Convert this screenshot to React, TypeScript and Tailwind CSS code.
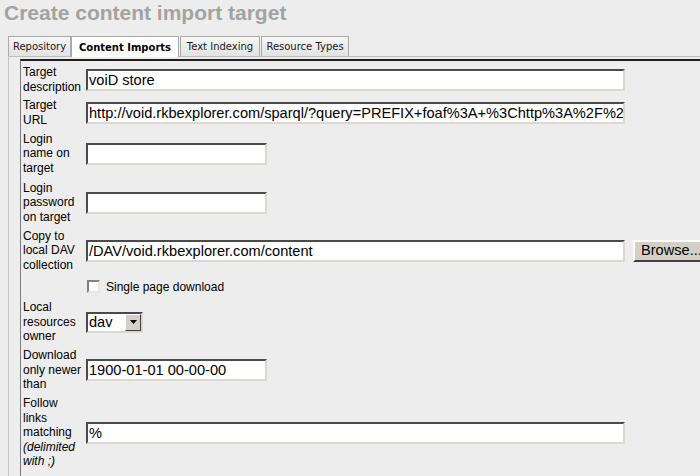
import React from "react";

const inputCls =
  "h-[22px] shrink-0 bg-white border-2 border-t-[#4a4a4a] border-l-[#4a4a4a] border-b-[#dcd8d0] border-r-[#dcd8d0] px-[1px] text-[14.6px] leading-[18px] text-black whitespace-nowrap overflow-hidden";

function Row({ h, label, children }: { h: number; label: React.ReactNode; children?: React.ReactNode }) {
  return (
    <div className="flex items-center" style={{ height: h }}>
      <div className="w-[59px] shrink-0 ml-[2px] text-[12px] leading-[14.5px] text-black">{label}</div>
      <div className="ml-[4px] flex items-center">{children}</div>
    </div>
  );
}

function Input({ w, value }: { w: number; value: string }) {
  return (
    <div className={inputCls} style={{ width: w }}>
      {value}
    </div>
  );
}

export default function App() {
  return (
    <div
      className="w-[700px] h-[476px] overflow-hidden bg-[#ededed]"
      style={{ fontFamily: '"Liberation Sans", Arial, sans-serif' }}
    >
      <div className="pl-[4px] pt-[1px] h-[37px] text-[21px] leading-[24px] font-bold text-[#a3a3a3]">
        Create content import target
      </div>
      <div className="ml-[8px] border-l border-[#c6c6c6]">
        <div
          className="flex h-[20px] border-b border-[#bdbdbd] items-end text-[10px]"
          style={{ fontFamily: '"DejaVu Sans", Verdana, sans-serif' }}
        >
          <div className="h-[20px] w-[63px] -ml-[1px] flex items-center justify-center border border-b-0 border-[#a9a9a9] bg-gradient-to-b from-[#f6f6f6] to-[#e2e2e2] text-[#1a1a1a]">
            Repository
          </div>
          <div className="h-[21px] -mb-[1px] w-[108px] flex items-center justify-center border border-b-0 border-[#a9a9a9] bg-white font-bold text-black">
            Content Imports
          </div>
          <div className="h-[20px] w-[80px] ml-[1px] flex items-center justify-center border border-b-0 border-[#a9a9a9] bg-gradient-to-b from-[#f6f6f6] to-[#e2e2e2] text-[#1a1a1a]">
            Text Indexing
          </div>
          <div className="h-[20px] w-[88px] ml-[1px] flex items-center justify-center border border-b-0 border-[#a9a9a9] bg-gradient-to-b from-[#f6f6f6] to-[#e2e2e2] text-[#1a1a1a]">
            Resource Types
          </div>
        </div>
        <div className="ml-[11px] mt-[2px] border-t-2 border-l border-t-[#1e1e1e] border-l-[#7a7a7a] pt-[2px] h-[420px]">
          <Row h={33} label={<>Target description</>}>
            <Input w={539} value="voiD store" />
          </Row>
          <Row h={33} label={<>Target URL</>}>
            <Input
              w={539}
              value="http://void.rkbexplorer.com/sparql/?query=PREFIX+foaf%3A+%3Chttp%3A%2F%2Fxmlns.com%2Ffoaf"
            />
          </Row>
          <Row h={49} label={<>Login name on target</>}>
            <Input w={181} value="" />
          </Row>
          <Row h={49} label={<>Login password on target</>}>
            <Input w={181} value="" />
          </Row>
          <Row h={47} label={<>Copy to local DAV collection</>}>
            <Input w={539} value="/DAV/void.rkbexplorer.com/content" />
            <div className="ml-[8px] h-[22px] w-[80px] shrink-0 flex items-center pl-[6px] bg-[#d4d0c8] border-2 border-t-white border-l-white border-b-[#404040] border-r-[#404040] text-[14.6px] text-black whitespace-nowrap">
              Browse...
            </div>
          </Row>
          <Row h={25} label={null}>
            <div className="ml-[1px] w-[13px] h-[13px] bg-white border-2 border-t-[#808080] border-l-[#808080] border-b-[#e6e6e6] border-r-[#e6e6e6]" />
            <span className="ml-[6px] text-[12px] text-black">Single page download</span>
          </Row>
          <Row h={46} label={<>Local resources owner</>}>
            <div className="h-[21px] w-[57px] flex bg-white border-2 border-t-[#4a4a4a] border-l-[#4a4a4a] border-b-[#dcd8d0] border-r-[#dcd8d0]">
              <div className="flex-1 pl-[1px] text-[14.6px] leading-[17px] text-black">dav</div>
              <div className="w-[16px] h-full bg-[#d4d0c8] border border-t-white border-l-white border-b-[#404040] border-r-[#404040] flex items-center justify-center">
                <svg width="7" height="4" viewBox="0 0 7 4">
                  <path d="M0 0h7L3.5 4z" fill="#000" />
                </svg>
              </div>
            </div>
          </Row>
          <Row h={50} label={<>Download only newer than</>}>
            <Input w={181} value="1900-01-01 00-00-00" />
          </Row>
          <Row
            h={75}
            label={
              <>
                Follow links matching <i>(delimited with ;)</i>
              </>
            }
          >
            <Input w={539} value="%" />
          </Row>
        </div>
      </div>
    </div>
  );
}
